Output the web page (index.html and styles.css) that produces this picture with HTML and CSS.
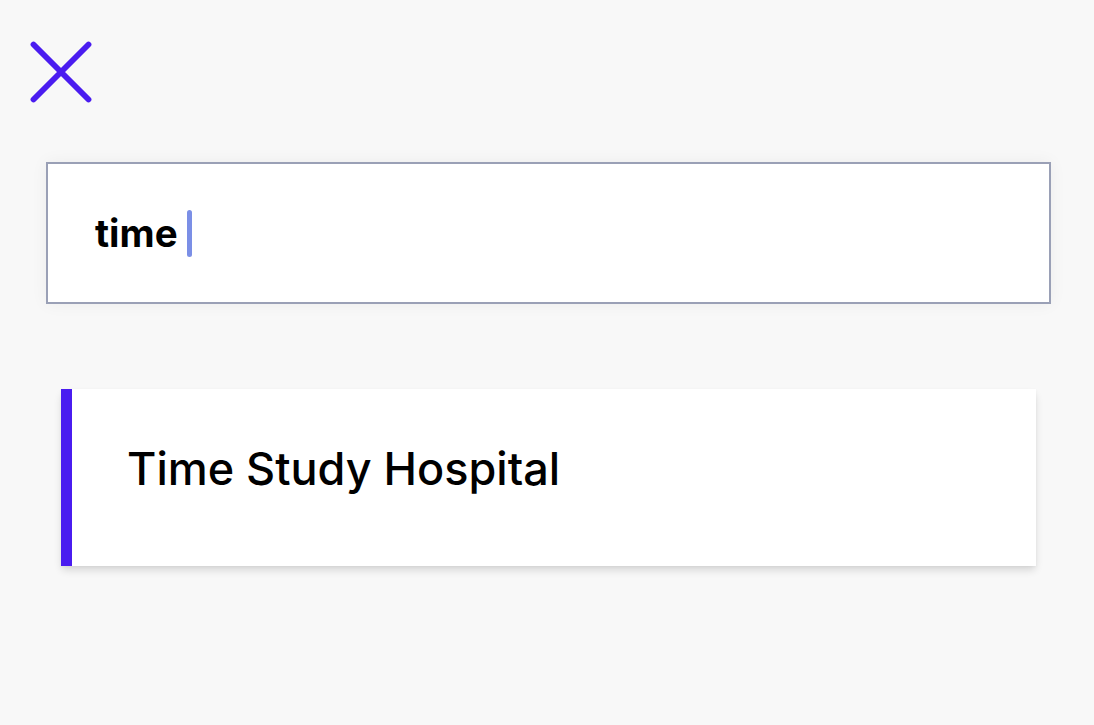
FILE: index.html
```html
<!DOCTYPE html>
<html>
<head>
<meta charset="utf-8">
<link rel="stylesheet" href="styles.css">
</head>
<body>
<div class="page">
  <button class="close" aria-label="Close">
    <svg width="64" height="64" viewBox="0 0 64 64">
      <path d="M4.5 4.5 L59.5 59.5 M59.5 4.5 L4.5 59.5" stroke="#4a1cf0" stroke-width="5.8" stroke-linecap="round" fill="none"/>
    </svg>
  </button>
  <div class="search">
    <span class="query">time</span><span class="caret"></span>
  </div>
  <div class="results">
    <div class="result">
      <span class="result-title">Time Study Hospital</span>
    </div>
  </div>
</div>
</body>
</html>
```

FILE: styles.css
```css
html, body {
  margin: 0;
  padding: 0;
  background: #f8f8f8;
}
.page {
  display: flex;
  flex-direction: column;
  box-sizing: border-box;
  min-height: 100vh;
  padding: 40px 43px 40px 46px;
  font-family: Inter, "Noto Sans", sans-serif;
}
.close {
  border: none;
  background: none;
  padding: 0;
  margin-left: -17px;
  width: 64px;
  height: 64px;
  cursor: pointer;
}
.close svg { display: block; }
.search {
  margin-top: 58px;
  height: 138px;
  background: #fff;
  border: 2px solid #9aa0b6;
  box-shadow: 0 0 16px rgba(0,0,0,0.05);
  display: flex;
  align-items: center;
  padding-left: 47px;
}
.query {
  font-size: 38.5px;
  font-weight: 700;
  color: #000;
}
.caret {
  display: inline-block;
  width: 5px;
  height: 47px;
  border-radius: 3px;
  background: #7b8fe6;
  margin-left: 9px;
}
.results {
  margin-top: 85px;
  padding: 0 15px;
}
.result {
  height: 177px;
  box-sizing: border-box;
  background: #fff;
  border-left: 11px solid #4a1cf0;
  box-shadow: 0 5px 8px -1px rgba(0,0,0,0.14), 0 1px 3px rgba(0,0,0,0.04);
  display: flex;
  align-items: center;
  padding-left: 55px;
  padding-bottom: 18px;
}
.result-title {
  font-size: 45px;
  font-weight: 500;
  color: #000;
}
```
